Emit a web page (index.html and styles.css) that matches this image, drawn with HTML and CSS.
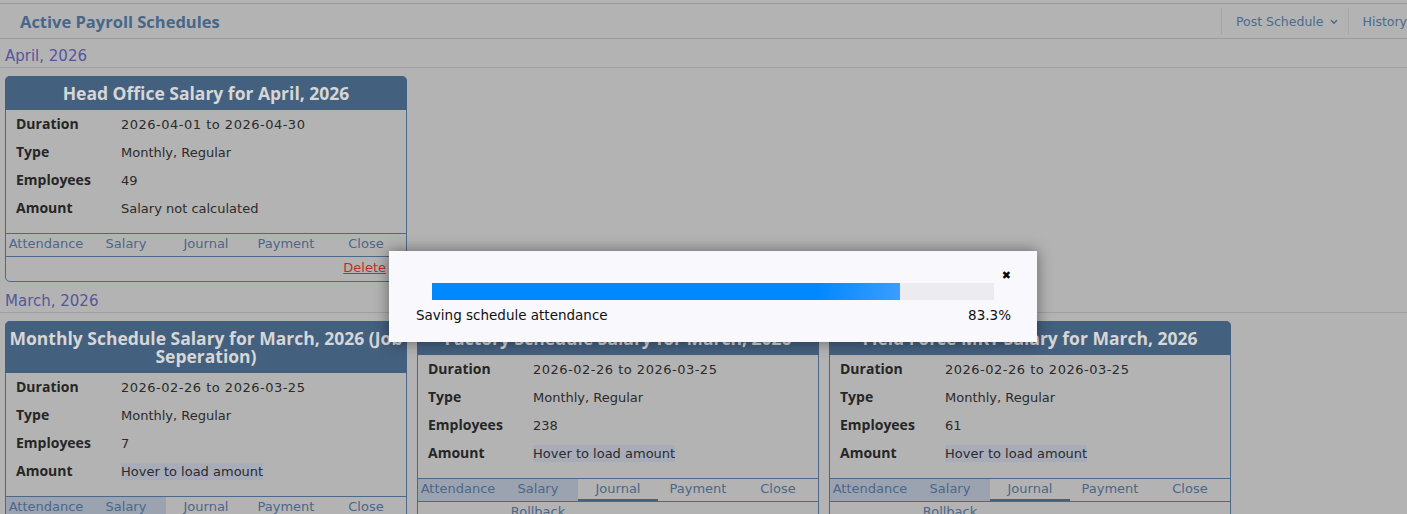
FILE: index.html
```html
<!DOCTYPE html>
<html lang="en">
<head>
    <meta charset="UTF-8">
    <meta name="viewport" content="width=device-width, initial-scale=1.0">
    <title>Active Payroll Schedules</title>
    <link rel="stylesheet" href="styles.css">
</head>
<body>

<div class="page-header">
    <h2 class="page-title">Active Payroll Schedules</h2>
    <div class="header-actions">
        <a class="header-link">Post Schedule
            <svg class="chevron" width="8" height="6" viewBox="0 0 8 6"><path d="M1 1.2 L4 4.2 L7 1.2" fill="none" stroke="currentColor" stroke-width="1.6"/></svg>
        </a>
        <a class="header-link">History</a>
    </div>
</div>

<!-- April -->
<h3 class="month-title">April, 2026</h3>
<div class="card-list">
    <div class="card">
        <div class="card-head">Head Office Salary for April, 2026</div>
        <div class="card-body">
            <div class="row"><span class="label">Duration</span><span class="date">2026-04-01 to 2026-04-30</span></div>
            <div class="row"><span class="label">Type</span><span>Monthly, Regular</span></div>
            <div class="row"><span class="label">Employees</span><span>49</span></div>
            <div class="row"><span class="label">Amount</span><span>Salary not calculated</span></div>
        </div>
        <div class="tabs">
            <a>Attendance</a><a>Salary</a><a>Journal</a><a>Payment</a><a>Close</a>
        </div>
        <div class="card-foot">
            <a class="delete">Delete</a>
        </div>
    </div>
</div>

<!-- March -->
<h3 class="month-title">March, 2026</h3>
<div class="card-list">
    <div class="card">
        <div class="card-head">Monthly Schedule Salary for March, 2026 (Job Seperation)</div>
        <div class="card-body">
            <div class="row"><span class="label">Duration</span><span class="date">2026-02-26 to 2026-03-25</span></div>
            <div class="row"><span class="label">Type</span><span>Monthly, Regular</span></div>
            <div class="row"><span class="label">Employees</span><span>7</span></div>
            <div class="row"><span class="label">Amount</span><span class="hover-amount">Hover to load amount</span></div>
        </div>
        <div class="tabs">
            <a class="done">Attendance</a><a class="done">Salary</a><a>Journal</a><a>Payment</a><a>Close</a>
        </div>
    </div>
    <div class="card">
        <div class="card-head">Factory Schedule Salary for March, 2026</div>
        <div class="card-body">
            <div class="row"><span class="label">Duration</span><span class="date">2026-02-26 to 2026-03-25</span></div>
            <div class="row"><span class="label">Type</span><span>Monthly, Regular</span></div>
            <div class="row"><span class="label">Employees</span><span>238</span></div>
            <div class="row"><span class="label">Amount</span><span class="hover-amount">Hover to load amount</span></div>
        </div>
        <div class="tabs">
            <a class="done">Attendance</a><a class="done">Salary</a><a class="current">Journal</a><a>Payment</a><a>Close</a>
        </div>
        <div class="tabs extra">
            <span></span><a>Rollback</a>
        </div>
    </div>
    <div class="card">
        <div class="card-head">Field Force MKT Salary for March, 2026</div>
        <div class="card-body">
            <div class="row"><span class="label">Duration</span><span class="date">2026-02-26 to 2026-03-25</span></div>
            <div class="row"><span class="label">Type</span><span>Monthly, Regular</span></div>
            <div class="row"><span class="label">Employees</span><span>61</span></div>
            <div class="row"><span class="label">Amount</span><span class="hover-amount">Hover to load amount</span></div>
        </div>
        <div class="tabs">
            <a class="done">Attendance</a><a class="done">Salary</a><a class="current">Journal</a><a>Payment</a><a>Close</a>
        </div>
        <div class="tabs extra">
            <span></span><a>Rollback</a>
        </div>
    </div>
</div>

<!-- Progress dialog -->
<div class="modal">
    <span class="modal-close">&#10006;</span>
    <div class="progress">
        <div class="progress-fill" style="width: 83.3%;"></div>
    </div>
    <div class="progress-info">
        <span>Saving schedule attendance</span>
        <span>83.3%</span>
    </div>
</div>

</body>
</html>
```

FILE: styles.css
```css
/* Styles */
body {
    margin: 0;
    background-color: #b3b3b3;
    font-family: "DejaVu Sans", Verdana, sans-serif;
    font-size: 13px;
    color: #2b2b2b;
    overflow: hidden;
}
a {
    cursor: pointer;
}
.page-header {
    display: flex;
    align-items: center;
    justify-content: space-between;
    margin-top: 3px;
    height: 34px;
    border-top: 1px solid #9c9c9c;
    border-bottom: 1px solid #9c9c9c;
}
.page-title {
    margin: 0 0 0 20px;
    font-family: "Open Sans", sans-serif;
    font-size: 16.5px;
    font-weight: bold;
    color: #46678b;
}
.header-actions {
    display: flex;
    align-self: stretch;
    align-items: center;
    padding: 4px 0;
    margin-right: -10px;
}
.header-link {
    display: flex;
    align-items: center;
    gap: 6px;
    align-self: stretch;
    padding: 0 10px 0 14px;
    border-left: 1px solid #a5a5a5;
    font-size: 12.5px;
    color: #4d6a8c;
}
.chevron {
    margin-top: 1px;
}
.month-title {
    margin: 0;
    padding: 8px 5px 2px;
    line-height: 18px;
    font-size: 15px;
    font-weight: normal;
    color: #56569f;
    border-bottom: 1px solid #9e9ea8;
}
.card-list {
    display: flex;
    align-items: flex-start;
    gap: 10px;
    margin: 8px 0 2px 5px;
}
.card {
    width: 400px;
    border: 1px solid #4d6888;
    border-radius: 5px;
}
.card-head {
    margin: -1px -1px 0;
    padding: 8px 4px;
    line-height: 18px;
    font-family: "Open Sans", sans-serif;
    font-size: 17.5px;
    font-weight: bold;
    text-align: center;
    color: #d6d6d6;
    background-color: #44607f;
    border-radius: 5px 5px 0 0;
}
.card-body {
    padding-bottom: 11px;
}
.row {
    display: flex;
    align-items: center;
    height: 28px;
    padding-left: 10px;
}
.label {
    width: 105px;
    font-family: "Open Sans", sans-serif;
    font-size: 14px;
    line-height: 16px;
    font-weight: bold;
    color: #262626;
}
.date {
    letter-spacing: 0.5px;
}
.hover-amount {
    background-color: #a8acb8;
    line-height: 17px;
}
.tabs {
    display: grid;
    grid-template-columns: repeat(5, 1fr);
    border-top: 1px solid #4d6888;
    border-bottom: 1px solid #4d6888;
}
.tabs a, .tabs span {
    height: 22px;
    line-height: 20px;
    text-align: center;
    color: #4b6789;
    box-sizing: border-box;
}
.tabs .done {
    background-color: #9ba3b1;
}
.tabs .current {
    border-bottom: 2px solid #44607f;
}
.tabs.extra {
    border-top: none;
}
.card-foot {
    display: flex;
    justify-content: flex-end;
    height: 24px;
    line-height: 21px;
    padding-right: 20px;
}
.delete {
    color: #c22d2d;
    text-decoration: underline;
}
.modal {
    position: absolute;
    left: 389px;
    top: 251px;
    width: 648px;
    height: 91px;
    box-sizing: border-box;
    padding: 32px 26px 0 27px;
    background-color: #f8f8fd;
    box-shadow: 0 0 14px rgba(0, 0, 0, 0.45);
    font-size: 13.5px;
    color: #111;
}
.modal-close {
    position: absolute;
    top: 18px;
    right: 26px;
    font-size: 11px;
    font-weight: bold;
    color: #000;
}
.progress {
    height: 17px;
    margin: 0 17px 0 16px;
    background-color: #ebebf0;
}
.progress-fill {
    height: 100%;
    background: linear-gradient(to right, #0088ff 0%, #0088ff 82%, #3b9dff 100%);
}
.progress-info {
    display: flex;
    justify-content: space-between;
    margin-top: 6px;
    line-height: 18px;
}
```
